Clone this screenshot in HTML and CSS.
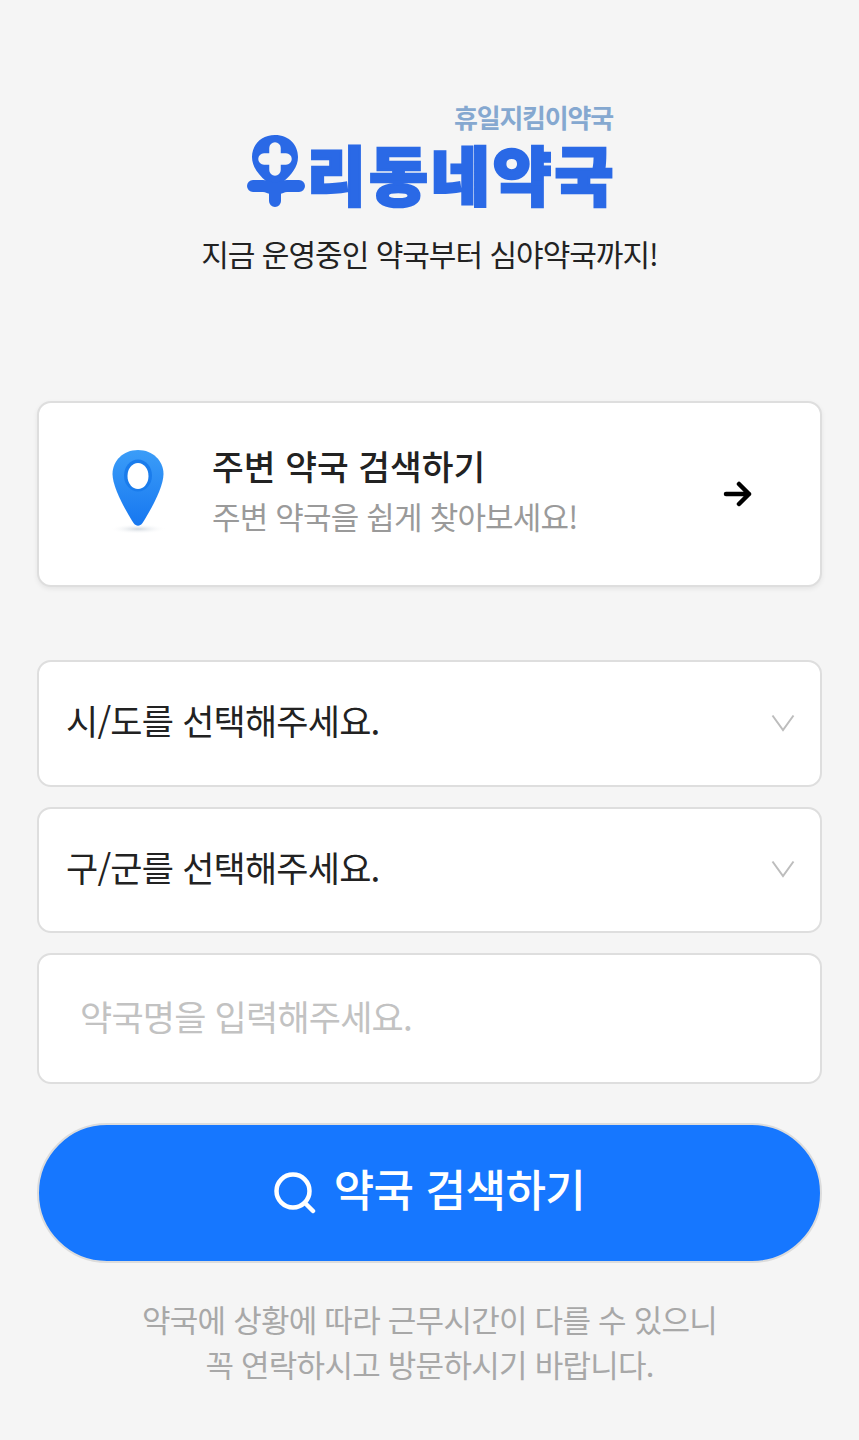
FILE: index.html
```html
<!DOCTYPE html>
<html lang="ko">
<head>
<meta charset="utf-8">
<title>우리동네약국</title>
<link rel="stylesheet" href="styles.css">
</head>
<body>
<main class="page">
  <header class="hero">
    <div class="logo">
      <div class="logo-sub">휴일지킴이약국</div>
      <div class="logo-main">
        <svg class="logo-pin" viewBox="0 0 60 72" aria-hidden="true">
          <path fill="#2a69e6" d="M28 0C14 0 5 10 5 22c0 10 7 18 14 24 4 3 6 6 9 6s5-3 9-6c7-6 14-14 14-24C51 10 42 0 28 0z"/>
          <path fill="none" stroke="#f5f5f5" stroke-width="11.500" stroke-linecap="round" stroke-linejoin="round" d="M28 13v22M17 24h22"/>
          <path fill="none" stroke="#2a69e6" stroke-width="12" stroke-linecap="round" d="M6 51h10c5 0 8 3 12 3s7-3 12-3h12M28 54v12"/>
        </svg>
        <span class="logo-word">리동네약국</span>
      </div>
    </div>
    <p class="tagline">지금 운영중인 약국부터 심야약국까지!</p>
  </header>

  <a class="near-card" href="#">
    <svg class="near-pin" viewBox="0 0 60 90" aria-hidden="true">
      <defs>
        <linearGradient id="pinFill" x1="0" y1="0" x2="0" y2="1">
          <stop offset="0" stop-color="#3b9df8"/>
          <stop offset="1" stop-color="#1677f0"/>
        </linearGradient>
        <radialGradient id="pinShadow">
          <stop offset="0" stop-color="#cfd6dd"/>
          <stop offset="1" stop-color="#ffffff" stop-opacity="0"/>
        </radialGradient>
      </defs>
      <ellipse cx="30" cy="81" rx="28" ry="5" fill="url(#pinShadow)"/>
      <path fill="url(#pinFill)" d="M30 2C15 2 4.500 13 4.500 26c0 14 14 38 21 49 2.500 3.500 6.500 3.500 9 0 7-11 21-35 21-49C55.500 13 45 2 30 2z"/>
      <ellipse cx="30" cy="27.500" rx="14" ry="16" fill="#1a7cec"/>
      <ellipse cx="30" cy="28" rx="10.500" ry="13" fill="#fff"/>
    </svg>
    <div class="near-text">
      <strong class="near-title">주변 약국 검색하기</strong>
      <span class="near-desc">주변 약국을 쉽게 찾아보세요!</span>
    </div>
    <svg class="near-arrow" viewBox="0 0 30 26" aria-hidden="true">
      <path fill="none" stroke="#000" stroke-width="4.500" stroke-linecap="round" stroke-linejoin="round" d="M3 13h23M16 3l10 10-10 10"/>
    </svg>
  </a>

  <form class="search">
    <div class="select-row">
      <span class="select-label">시/도를 선택해주세요.</span>
      <svg class="chevron" viewBox="0 0 24 18" aria-hidden="true"><path fill="none" stroke="#bdbdbd" stroke-width="2" d="M1.500 1.500L12 16 22.500 1.500"/></svg>
    </div>
    <div class="select-row">
      <span class="select-label">구/군를 선택해주세요.</span>
      <svg class="chevron" viewBox="0 0 24 18" aria-hidden="true"><path fill="none" stroke="#bdbdbd" stroke-width="2" d="M1.500 1.500L12 16 22.500 1.500"/></svg>
    </div>
    <input class="name-input" type="text" placeholder="약국명을 입력해주세요.">
    <button class="search-btn" type="button">
      <svg class="search-icon" viewBox="0 0 42 42" aria-hidden="true">
        <circle cx="19" cy="19" r="16.500" fill="none" stroke="#fff" stroke-width="4.500"/>
        <path fill="none" stroke="#fff" stroke-width="4.500" stroke-linecap="round" d="M31 31l8 8"/>
      </svg>
      <span class="search-label">약국 검색하기</span>
    </button>
  </form>

  <p class="notice">약국에 상황에 따라 근무시간이 다를 수 있으니<br>꼭 연락하시고 방문하시기 바랍니다.</p>
</main>
</body>
</html>
```
FILE: styles.css
```css
* { box-sizing: border-box; }
html, body { margin: 0; padding: 0; }
body {
  background: #f5f5f5;
  font-family: "Noto Sans CJK KR", "Noto Sans", sans-serif;
  color: #222;
}
.page {
  width: 859px;
  height: 1440px;
  overflow: hidden;
  padding: 100px 37px 0;
}
.hero {
  display: flex;
  flex-direction: column;
  align-items: center;
  height: 301px;
}
.logo {
  width: 366px;
  display: flex;
  flex-direction: column;
  align-items: flex-end;
  margin-left: 1px;
}
.logo-sub {
  font-size: 26px;
  font-weight: 700;
  line-height: 34px;
  letter-spacing: -1.200px;
  color: #85a8d0;
}
.logo-main {
  display: flex;
  align-items: flex-start;
  height: 76px;
  width: 100%;
}
.logo-pin { width: 60px; height: 72px; flex: none; margin-top: 1px; }
.logo-word {
  font-size: 64px;
  font-weight: 900;
  line-height: 76px;
  letter-spacing: 3px;
  color: #2a69e6;
  -webkit-text-stroke: 2.500px #2a69e6;
  stroke-linejoin: round;
  white-space: nowrap;
}
.tagline {
  margin: 21px 0 0;
  font-size: 30px;
  line-height: 44px;
  letter-spacing: -1px;
  font-weight: 400;
  color: #222;
}
.near-card {
  display: flex;
  align-items: center;
  height: 186px;
  background: #fff;
  border: 2px solid #dedede;
  border-radius: 14px;
  box-shadow: 0 2px 5px rgba(0,0,0,.07);
  padding: 0 68px 0 70px;
  text-decoration: none;
}
.near-pin { width: 60px; height: 90px; flex: none; margin: -3px 0 0 -1px; }
.near-text {
  flex: 1;
  display: flex;
  flex-direction: column;
  margin-left: 44px;
  margin-top: -7px;
}
.near-title {
  font-size: 34.500px;
  font-weight: 500;
  line-height: 50px;
  letter-spacing: 0;
  color: #222;
}
.near-desc {
  font-size: 31px;
  line-height: 51px;
  letter-spacing: -.8px;
  color: #9a9a9a;
}
.near-arrow { width: 30px; height: 26px; flex: none; margin-right: -1px; }
.search {
  display: flex;
  flex-direction: column;
  gap: 20px;
  margin-top: 73px;
}
.select-row {
  display: flex;
  align-items: center;
  justify-content: space-between;
  height: 126.500px;
  background: #fff;
  border: 2px solid #dedede;
  border-radius: 14px;
  padding: 0 25px 0 27px;
  font-size: 35px;
  letter-spacing: -.8px;
  color: #222;
}
.select-label { margin-bottom: 7px; }
.chevron { width: 24px; height: 18px; flex: none; margin-top: -1px; }
.name-input {
  display: block;
  width: 100%;
  height: 131px;
  background: #fff;
  border: 2px solid #dedede;
  border-radius: 14px;
  padding: 0 40px 7px 41px;
  font: 400 35px "Noto Sans CJK KR", sans-serif;
  letter-spacing: -.8px;
  outline: none;
}
.name-input::placeholder { color: #c2c2c2; opacity: 1; }
.search-btn {
  display: flex;
  align-items: center;
  justify-content: center;
  gap: 18px;
  height: 140px;
  margin-top: 19px;
  padding: 0;
  background: #1677ff;
  border: 2px solid #dcdcdc;
  border-radius: 70px;
  color: #fff;
  font: 500 44px "Noto Sans CJK KR", sans-serif;
  letter-spacing: -.5px;
}
.search-label { margin-top: -10px; }
.search-icon { width: 42px; height: 42px; flex: none; }
.notice {
  margin: 33px 0 0;
  text-align: center;
  font-size: 31px;
  line-height: 45px;
  letter-spacing: -.75px;
  color: #a8a8a8;
}
```
